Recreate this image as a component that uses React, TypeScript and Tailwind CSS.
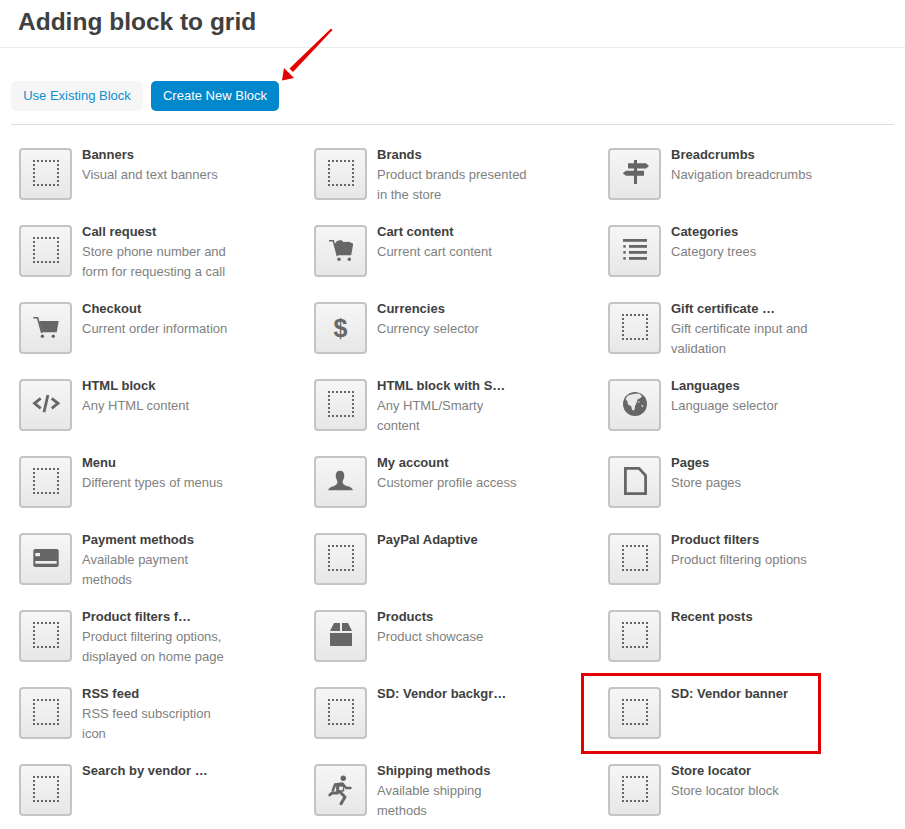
import React from "react";

const C = "#666666";

const Dotted = () => (
  <rect x="15" y="13" width="24" height="24" fill="none" stroke={C} strokeWidth="2" strokeDasharray="2 2" strokeDashoffset="1" />
);

const icons: Record<string, React.ReactNode> = {
  dotted: <Dotted />,
  signs: (
    <g fill={C}>
      <rect x="26" y="12" width="3" height="24" />
      <path d="M20 15.3H38L41 18L38 20.5H20Z" />
      <path d="M18 22.7H36V27.7H18L14.7 25.2Z" />
    </g>
  ),
  list: (
    <g fill={C}>
      <rect x="15" y="14" width="24" height="2.8" />
      <rect x="21" y="20" width="18" height="2.8" />
      <rect x="21" y="26" width="18" height="2.8" />
      <rect x="21" y="32" width="18" height="2.8" />
      <circle cx="16.5" cy="21.4" r="1.4" />
      <circle cx="16.5" cy="27.4" r="1.4" />
      <circle cx="16.5" cy="33.4" r="1.4" />
    </g>
  ),
  cartFull: (
    <g fill={C}>
      <path d="M15 15.7H19.3L23.4 31" fill="none" stroke={C} strokeWidth="1.5" />
      <path d="M20 19.5L23 16L27 15L29.5 17L35 16.8L39 18.5V20L37.2 30.2H23.2Z" />
      <circle cx="25" cy="34.2" r="1.7" />
      <circle cx="35.3" cy="34.2" r="1.7" />
    </g>
  ),
  cart: (
    <g fill={C}>
      <path d="M14.3 15.7H18.6L22.8 31" fill="none" stroke={C} strokeWidth="1.6" />
      <path d="M20.3 19H39.7L37.7 30.3H22.8Z" />
      <circle cx="23.4" cy="34.2" r="1.7" />
      <circle cx="34.3" cy="34.2" r="1.7" />
    </g>
  ),
  code: (
    <g fill="none" stroke={C} strokeWidth="2.8">
      <path d="M21.7 19.3L15.5 24.3L21.7 29.3" />
      <path d="M28.9 16L25 33.3" />
      <path d="M32.7 19.3L39 24.3L32.7 29.3" />
    </g>
  ),
  globe: (
    <g>
      <circle cx="27" cy="25" r="12" fill={C} />
      <path
        d="M17.5 20L20 16.5L25 15L31 14.5L34 17L32.5 19L29.5 20.5L28.5 24L27 27L26.5 31L24.5 31.5L23 27L20 25.5L19.5 22.5Z"
        fill="#e9e9e9"
      />
      <path d="M33 26L35.5 26.5L34.5 28.5Z M30 22L31.5 22.5L31 24.5Z" fill="#e9e9e9" />
    </g>
  ),
  page: <path d="M17.4 12.4H31L37.6 19.5V37.6H17.4Z" fill="none" stroke={C} strokeWidth="2.8" />,
  user: (
    <path
      d="M26 14.7C28.6 14.7 30.4 16.7 30.3 19.6C30.2 22 29.3 24 28.7 25C28.4 27 29 28.4 31 29.3C34 30.4 37.5 30.9 38.7 33.6V34.2H14.3C14.6 31.6 18.2 30.6 21 29.4C23.2 28.4 23.7 27 23.3 25C22.7 24 21.8 22 21.7 19.6C21.6 16.7 23.4 14.7 26 14.7Z"
      fill={C}
    />
  ),
  card: (
    <g>
      <rect x="14.3" y="16" width="25.4" height="18" rx="2" fill={C} />
      <rect x="16.3" y="20" width="4.7" height="3.2" fill="#eeeeee" />
      <rect x="16.3" y="28" width="21.4" height="2.7" fill="#eeeeee" />
    </g>
  ),
  box: (
    <g fill={C}>
      <rect x="16" y="23" width="22" height="13" />
      <path d="M16 21L20 13H26V21Z" />
      <path d="M28 13H34L38 21H28Z" />
    </g>
  ),
  runner: (
    <g>
      <circle cx="29.3" cy="14.2" r="2.7" fill={C} />
      <g fill="none" stroke={C} strokeLinejoin="round" strokeLinecap="round">
        <path d="M18.8 26.5L21 20.5L28.5 19.5L32 24L36.5 24" strokeWidth="2.4" />
        <path d="M24.5 21L23.5 29L18 29L15.8 31" strokeWidth="3" />
        <path d="M27.5 21.5L26.5 28.5L31 33L27 39.8" strokeWidth="3" />
        <path d="M22 21.5H29L30 27L24 27Z" fill={C} strokeWidth="1" />
      </g>
      <rect x="25.2" y="22.6" width="3.6" height="3.6" fill="#eeeeee" transform="rotate(12 27 24.4)" />
    </g>
  ),
};

type Block = { name: string; desc?: string; icon?: string; dollar?: boolean };

const blocks: Block[] = [
  { name: "Banners", desc: "Visual and text banners" },
  { name: "Brands", desc: "Product brands presented in the store" },
  { name: "Breadcrumbs", desc: "Navigation breadcrumbs", icon: "signs" },
  { name: "Call request", desc: "Store phone number and form for requesting a call" },
  { name: "Cart content", desc: "Current cart content", icon: "cartFull" },
  { name: "Categories", desc: "Category trees", icon: "list" },
  { name: "Checkout", desc: "Current order information", icon: "cart" },
  { name: "Currencies", desc: "Currency selector", dollar: true },
  { name: "Gift certificate …", desc: "Gift certificate input and validation" },
  { name: "HTML block", desc: "Any HTML content", icon: "code" },
  { name: "HTML block with S…", desc: "Any HTML/Smarty content" },
  { name: "Languages", desc: "Language selector", icon: "globe" },
  { name: "Menu", desc: "Different types of menus" },
  { name: "My account", desc: "Customer profile access", icon: "user" },
  { name: "Pages", desc: "Store pages", icon: "page" },
  { name: "Payment methods", desc: "Available payment methods", icon: "card" },
  { name: "PayPal Adaptive" },
  { name: "Product filters", desc: "Product filtering options" },
  { name: "Product filters f…", desc: "Product filtering options, displayed on home page" },
  { name: "Products", desc: "Product showcase", icon: "box" },
  { name: "Recent posts" },
  { name: "RSS feed", desc: "RSS feed subscription icon" },
  { name: "SD: Vendor backgr…" },
  { name: "SD: Vendor banner" },
  { name: "Search by vendor …" },
  { name: "Shipping methods", desc: "Available shipping methods", icon: "runner" },
  { name: "Store locator", desc: "Store locator block" },
];

function BlockIcon({ block }: { block: Block }) {
  return (
    <div className="flex h-[52px] w-[53px] shrink-0 items-center justify-center rounded-[4px] border-2 border-[#c4c4c4] bg-gradient-to-b from-[#f6f6f6] to-[#e7e7e7]">
      {block.dollar ? (
        <span className="text-[25px] leading-none font-bold text-[#666666]">$</span>
      ) : (
        <svg width="49" height="48" viewBox="2 2 49 48">
          {icons[block.icon ?? "dotted"]}
        </svg>
      )}
    </div>
  );
}

export default function App() {
  return (
    <div className="relative h-[829px] w-[905px] overflow-hidden bg-white font-['Liberation_Sans',Arial,sans-serif]">
      <div className="h-[48px] border-b border-[#e9e9e9] pl-[18px]">
        <h1 className="text-[24.5px] leading-[44px] font-bold text-[#404040]">Adding block to grid</h1>
      </div>

      <div className="mx-[11px] mt-[33px] flex gap-2 border-b border-[#dddddd] pb-[13px]">
        <button className="h-[30px] w-[132px] rounded-[5px] bg-[#f6f6f6] text-[13px] text-[#0d8ed1]">
          Use Existing Block
        </button>
        <button className="h-[30px] w-[128px] rounded-[5px] bg-[#0087cc] text-[13px] text-white">
          Create New Block
        </button>
      </div>

      <div className="mt-[23px] ml-[19px] grid grid-cols-[295px_294px_1fr] auto-rows-[77px]">
        {blocks.map((b) => (
          <div key={b.name} className="flex gap-[10px]">
            <BlockIcon block={b} />
            <div className="-mt-[3px] w-[152px] leading-5">
              <div className="text-[13px] font-bold whitespace-nowrap text-[#404040]">{b.name}</div>
              {b.desc && <div className="text-[13px] text-[#808080]">{b.desc}</div>}
            </div>
          </div>
        ))}
      </div>

      <div className="absolute top-[673px] left-[581px] h-[81px] w-[240px] border-[3px] border-[#e30000]" />

      <svg className="absolute top-[25px] left-[278px]" width="58" height="58" viewBox="0 0 58 58">
        <path d="M53 3.5L54.5 5L15 47L11.5 43.5Z" fill="#e30000" />
        <path d="M4 55.5L6 43L16 53Z" fill="#e30000" />
      </svg>
    </div>
  );
}
